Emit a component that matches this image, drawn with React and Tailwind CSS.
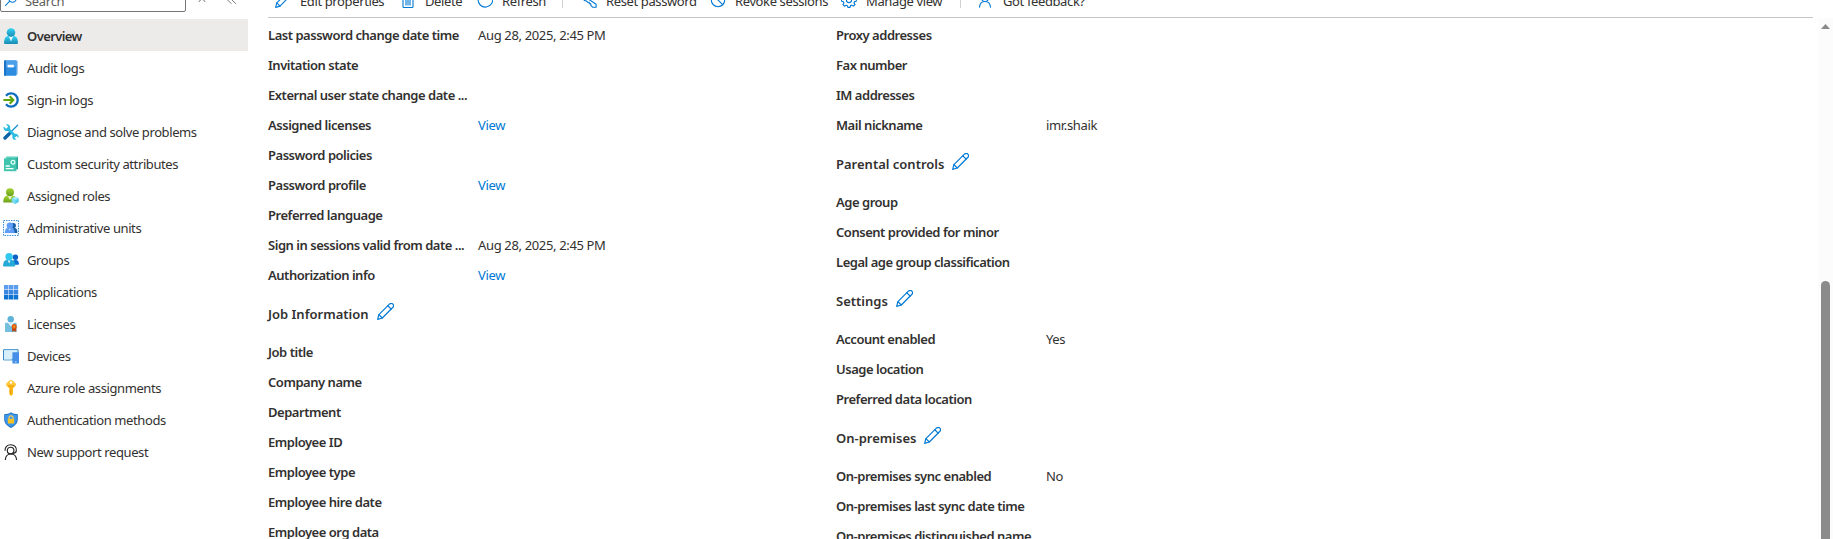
import React from "react";

const line = { fill: "none", stroke: "#0078d4", strokeWidth: 1.1, strokeLinejoin: "round", strokeLinecap: "round" };

function Svg({ children, className = "size-4", box = "0 0 16 16" }) {
  return (
    <svg viewBox={box} className={`${className} shrink-0`}>
      {children}
    </svg>
  );
}

function Pencil({ className }) {
  return (
    <Svg className={className}>
      <g {...line}>
        <path d="M.6 15.4 1.8 10.9 11.9.9a2.2 2.2 0 0 1 3.1 3.1L5 14.1Z" />
        <path d="m10.2 2.6 3.1 3.1M1.8 10.9 5 14.1" />
      </g>
    </Svg>
  );
}

const icons = {
  overview: (
    <Svg>
      <defs>
        <linearGradient id="ov" x2="0" y2="1">
          <stop stopColor="#32d4f5" />
          <stop offset="1" stopColor="#198ab3" />
        </linearGradient>
      </defs>
      <path d="M1 14.7C1.3 11 2.300 8.300 4.800 8h6.400c2.500.3 3.500 3 3.800 6.700q0 1.200-1.200 1.200H2.200Q1 15.900 1 14.700Z" fill="url(#ov)" />
      <path d="M5.600 7.900h4.800L8 13.500Z" fill="#e3f7fc" />
      <circle cx="8" cy="4.500" r="4.300" fill="url(#ov)" />
    </Svg>
  ),
  audit: (
    <Svg>
      <rect x="2" y=".4" width="13" height="14.200" rx="1" fill="#a7cdf0" />
      <rect x="1" y=".4" width="12.600" height="15.400" rx="1" fill="#2c8de0" />
      <path d="M1 1.400q0-1 1-1h10.600q1 0 1 1V7H1Z" fill="#4ba0ea" />
      <path d="M1 1.400q0-1 1-1h1v15.400H2q-1 0-1-1Z" fill="#1b74c8" />
      <rect x="4.600" y="4.800" width="6.200" height="2.600" fill="#fff" />
    </Svg>
  ),
  signin: (
    <Svg>
      <path d="M3 3.800A6.600 6.600 0 1 1 3 12.200" fill="none" stroke="#0f6cbd" strokeWidth="2.300" />
      <path d="M.4 8h9M6.700 4.200 10.300 8l-3.600 3.800" fill="none" stroke="#5ea508" strokeWidth="2.100" />
    </Svg>
  ),
  diagnose: (
    <Svg>
      <path d="m14.600 1.200-8 8" stroke="#1a8fd0" strokeWidth="1.300" strokeLinecap="round" />
      <path d="m6.300 9.700-4.300 4.300" stroke="#0a64a8" strokeWidth="3.400" strokeLinecap="round" />
      <path d="m4 4 8.800 8.800" stroke="#2cbbe0" strokeWidth="2.700" />
      <path d="M.8 2.600 3 4.800l1.800-.4.4-1.800L3 .5c2-.7 4.600.8 4.200 3.700C6.800 6.800 4 7.700 2.200 6.700.8 6 .2 4.300.8 2.600ZM15.300 13.700l-2-2-1.600.3-.4 1.600 2 2c-2 .6-4.200-.6-4-3 .2-2.400 2.500-3.400 4.300-2.600 1.600.7 2.300 2.200 1.700 3.700Z" fill="#2cbbe0" />
    </Svg>
  ),
  custom: (
    <Svg>
      <path d="M3.600.8H15v12.400h-2V3.500H3.600Z" fill="#27a294" />
      <rect x="1" y="2.600" width="12.400" height="12.600" fill="#3fc5ad" />
      <path d="M1 2.600 3.600.8H15l-1.600 1.800Z" fill="#5bd4bf" />
      <circle cx="10" cy="6.300" r="1.900" fill="none" stroke="#e7fffa" strokeWidth="1.200" />
      <path d="M2.700 10h4M2.700 12.600h7.800" stroke="#fff" strokeWidth="1.300" />
    </Svg>
  ),
  roles: (
    <Svg>
      <defs>
        <linearGradient id="gr" x2="0" y2="1">
          <stop stopColor="#a3d52b" />
          <stop offset="1" stopColor="#6a9f1f" />
        </linearGradient>
      </defs>
      <path d="M.2 13.400C.5 10.200 1.600 8 3.800 7.800h6.400c2.200.2 3.300 2.400 3.600 5.600q0 1.200-1.200 1.200H1.300Q.2 14.600.2 13.400Z" fill="url(#gr)" />
      <path d="M4.700 7.700h4.600L7 12Z" fill="#e9f7cf" />
      <circle cx="7" cy="4.200" r="4" fill="url(#gr)" />
      <path d="m12.300 8.700 3.500 1.600v3.800l-3.500 1.800-3.500-1.800v-3.800Z" fill="#55cdee" />
      <path d="m12.300 8.700 3.500 1.600-3.500 1.600-3.500-1.600Z" fill="#a6ebfa" />
      <path d="M12.300 11.900v4l-3.500-1.800v-3.800Z" fill="#7bdcf4" />
    </Svg>
  ),
  admin: (
    <Svg>
      <rect x=".5" y=".5" width="15" height="15" fill="#f4faff" stroke="#3b91d8" strokeDasharray="1.500 1" />
      <circle cx="10.200" cy="5.600" r="2.700" fill="#155ea8" />
      <path d="M8 13c0-3 .8-4.900 3.400-4.900 2.200 0 3 2 3 4.900Z" fill="#155ea8" />
      <circle cx="6.900" cy="5.600" r="3.200" fill="#5e9df5" />
      <path d="M1.700 13c.2-3 1.200-5 3-5h4c1.900 0 2.900 2 3 5Z" fill="#5e9df5" />
      <path d="M6 8.800h1.600L6.800 11Z" fill="#e6f1ff" />
    </Svg>
  ),
  groups: (
    <Svg>
      <circle cx="12.400" cy="5.300" r="2.700" fill="#0b62c4" />
      <path d="M9 12.800C9 9.700 10 8 12 8h1c2 0 2.900 1.900 3 4q0 .8-.8.8Z" fill="#0b72d4" />
      <path d="M0 13.500C.3 10.400 1.400 8.300 3.400 8.100h5.400c2 .2 3.100 2.300 3.400 5.400q0 1-1 1H1Q0 14.500 0 13.500Z" fill="#25a9d6" />
      <path d="M4.700 8.300h2.800L6.100 11.500Z" fill="#e3f7fc" />
      <circle cx="6.100" cy="4.800" r="3.700" fill="#32c8ee" />
    </Svg>
  ),
  apps: (
    <Svg>
      {[
        [1, "#5c9df0"],
        [6, "#3b87e0"],
        [11, "#0f74d1"],
      ].map(([y, fill]) => (
        <path key={y} fill={fill} d={`M1 ${y}h4.400v4.400H1ZM5.900 ${y}h4.400v4.400H5.900ZM10.800 ${y}h4.400v4.400h-4.400Z`} />
      ))}
    </Svg>
  ),
  licenses: (
    <Svg>
      <path d="M2 7.400q0-.6.6-.6H5l3 3.600 3-3.600h1.800q.8 0 .8.600v8q0 .5-.5.500H2.500q-.5 0-.5-.5Z" fill="#74bfdf" />
      <path d="M5.600 6.800h4.800L8 9.900Z" fill="#d8f0fa" />
      <circle cx="7.700" cy="3.300" r="3.200" fill="#5fb3d9" />
      <path d="M9.200 11h4v5l-2-1.200-2 1.200Z" fill="#c2410c" />
      <circle cx="11.200" cy="10.600" r="2.500" fill="#dd5a0b" />
      <circle cx="11.200" cy="10.600" r="1.100" fill="#f6a030" />
    </Svg>
  ),
  devices: (
    <Svg>
      <path d="M.5 1.700h14.600v10.200H.5Z" fill="#bfe4f7" stroke="#3789ca" />
      <path d="M1 2.200h13.600L8 11.400H1Z" fill="#d6effb" />
      <rect x="9.400" y="4.200" width="6.600" height="11.300" rx=".6" fill="#448fe8" />
      <path d="M12 13.900h1.500" stroke="#cfe4ff" />
    </Svg>
  ),
  key: (
    <Svg>
      <path d="M8 0c.8 0 4.700 3.300 4.900 4.300.2 1.300-2.200 3.300-2.900 3.800v6L8.200 16 6.300 14.300V8.100C5.500 7.600 3 5.600 3.200 4.300 3.400 3.300 7.200 0 8 0Z" fill="#fbb714" />
      <path d="M8 0c.8 0 4.700 3.300 4.900 4.300.1.500-.2 1-.6 1.600H3.700c-.4-.6-.6-1.100-.5-1.600C3.400 3.300 7.200 0 8 0Z" fill="#ffc83a" />
      <circle cx="8" cy="2.500" r="1.200" fill="#fff" />
      <path d="M5.200 5.900h5.600" stroke="#e88d00" strokeWidth=".8" />
      <path d="M7.600 9v5" stroke="#e59a00" strokeWidth=".9" />
    </Svg>
  ),
  auth: (
    <Svg>
      <path d="M8 .2c2.300 1.600 4.200 1.900 6.800 2v5c0 4.300-3.400 7-6.800 8.700-3.400-1.700-6.800-4.400-6.800-8.700v-5C3.800 2.100 5.700 1.800 8 .2Z" fill="#1b73c4" />
      <path d="M8 1.300c2 1.300 3.700 1.700 5.900 1.800v4.100c0 3.800-2.900 6-5.900 7.600-3-1.600-5.900-3.800-5.900-7.600V3.100C4.300 3 6 2.600 8 1.300Z" fill="#4096e8" />
      <path d="M6 7.200V5.800c0-2.600 4-2.600 4 0v1.400" fill="none" stroke="#ffd24d" strokeWidth="1.100" />
      <rect x="4.900" y="6.800" width="6.200" height="4.600" rx=".5" fill="#f7c223" />
    </Svg>
  ),
  support: (
    <Svg>
      <g fill="none" stroke="#222" strokeWidth="1.150">
        <circle cx="7.600" cy="6.500" r="3.300" />
        <path d="M2 6.800C1.900 3 4.200.7 7.700.7s6.300 2.600 5.600 6.400c-.3 1.500-1.600 2.200-4 2.200" />
        <path d="M2.300 16c.2-3.600 2.300-6 5.600-6s5.500 2.400 5.700 6" />
      </g>
    </Svg>
  ),
};

const nav = [
  ["overview", "Overview"],
  ["audit", "Audit logs"],
  ["signin", "Sign-in logs"],
  ["diagnose", "Diagnose and solve problems"],
  ["custom", "Custom security attributes"],
  ["roles", "Assigned roles"],
  ["admin", "Administrative units"],
  ["groups", "Groups"],
  ["apps", "Applications"],
  ["licenses", "Licenses"],
  ["devices", "Devices"],
  ["key", "Azure role assignments"],
  ["auth", "Authentication methods"],
  ["support", "New support request"],
];

function Sidebar() {
  return (
    <aside className="w-[248px] shrink-0">
      <div className="-mt-[12px] mb-[7px] flex h-6 items-center">
        <div className="flex h-6 w-[186px] items-center rounded-[2px] border border-[#767676] pl-1">
          <Svg className="size-3">
            <g {...line} strokeWidth="1.400">
              <circle cx="10" cy="6" r="5" />
              <path d="M6.400 9.600.8 15.200" />
            </g>
          </Svg>
          <span className="ml-2 pt-[2px] tracking-[-0.3px] text-[#605e5c]">Search</span>
        </div>
        <Svg className="ml-[11px] size-[10px]">
          <path d="m3 11 5-6 5 6" fill="none" stroke="#605e5c" strokeWidth="1.500" />
        </Svg>
        <Svg className="ml-[20px] size-[10px]">
          <path d="M7 2 1 8l6 6M14 2 8 8l6 6" fill="none" stroke="#605e5c" strokeWidth="1.300" />
        </Svg>
      </div>
      <nav>
        {nav.map(([icon, label], i) => (
          <a
            key={icon}
            className={`flex h-8 items-center gap-2 pt-[2px] pl-[3px] ${i === 0 ? "bg-[#edebe9] font-semibold tracking-[-0.6px]" : ""}`}
          >
            {icons[icon]}
            <span>{label}</span>
          </a>
        ))}
      </nav>
    </aside>
  );
}

function Tool({ icon, label, className }) {
  return (
    <div className={`flex shrink-0 items-center ${className}`}>
      {icon}
      <span className="ml-[9px] pt-[2px] whitespace-nowrap">{label}</span>
    </div>
  );
}

function Toolbar() {
  return (
    <div className="-mt-[18px] flex h-9 w-[1545px] items-center border-b border-[#c8c6c4] pl-[7px] tracking-[-0.38px]">
      <Tool className="w-[125px]" icon={<Pencil className="size-4" />} label="Edit properties" />
      <Tool
        className="w-[77px]"
        label="Delete"
        icon={
          <Svg>
            <path {...line} d="M1.500 3h13M5.500 3V1h5v2M3 3v11.500q0 1 1 1h8q1 0 1-1V3M6 5.500v7.500M8 5.500v7.500M10 5.500v7.500" />
          </Svg>
        }
      />
      <Tool
        className="w-[85px]"
        label="Refresh"
        icon={
          <Svg>
            <path {...line} d="M10.500.8A7.300 7.300 0 1 1 4.500 1.600M4.800 5V1.200H1" />
          </Svg>
        }
      />
      <div className="h-[17px] w-px bg-[#d2d0ce]" />
      <Tool
        className="ml-[18px] w-[129px]"
        label="Reset password"
        icon={
          <Svg>
            <path {...line} d="M8.500 7.800A4 4 0 1 0 5.500 9l1.300 1.300h1.500v1.500h1.500v1.500l2 2h3.300v-3Z" />
          </Svg>
        }
      />
      <Tool
        className="w-[131px]"
        label="Revoke sessions"
        icon={
          <Svg>
            <circle {...line} cx="8" cy="8" r="6.700" />
            <path {...line} d="m3.300 3.300 9.400 9.400" />
          </Svg>
        }
      />
      <Tool
        className="w-[119px]"
        label="Manage view"
        icon={
          <Svg>
            <circle {...line} cx="8" cy="8" r="2.600" />
            <path {...line} d="m6.800.8-.4 1.900-1.300.6-1.700-1.100-1.600 1.600 1 1.800-.5 1.200-1.700.4v2l1.800.5.5 1.300-1 1.600 1.500 1.600 1.800-1 1.200.5.500 1.700h2.200l.4-1.800 1.300-.5 1.700 1 1.500-1.500-1-1.700.5-1.300 1.800-.4v-2l-1.800-.5-.5-1.300 1-1.700-1.500-1.500-1.700 1-1.300-.5L9.100.8Z" />
          </Svg>
        }
      />
      <div className="h-[17px] w-px bg-[#d2d0ce]" />
      <Tool
        className="ml-[17px]"
        label="Got feedback?"
        icon={
          <Svg>
            <circle {...line} cx="7" cy="6" r="3.500" />
            <path {...line} d="M1.500 15.300c.3-3.700 2.200-5.800 5.500-5.800s5.200 2.100 5.500 5.800M10 1h5v5h-2l-1.500 1.500" />
          </Svg>
        }
      />
    </div>
  );
}

function Row({ label, value, link }) {
  return (
    <div className="flex h-[30px] items-center">
      <dt className="w-[210px] shrink-0 whitespace-nowrap font-semibold tracking-[-0.47px]">{label}</dt>
      <dd className={`whitespace-nowrap tracking-[-0.35px] ${link ? "text-[#0078d4]" : ""}`}>{value}</dd>
    </div>
  );
}

function Heading({ children }) {
  return (
    <h3 className="flex h-[47px] items-center gap-2 text-[13px] font-semibold tracking-[0px]">
      {children}
      <Pencil className="-mt-[5px] size-[17px]" />
    </h3>
  );
}

function Section({ title, rows }) {
  return (
    <section>
      {title && <Heading>{title}</Heading>}
      <dl>
        {rows.map(([label, value]) => (
          <Row key={label} label={label} value={value} link={value === "View"} />
        ))}
      </dl>
    </section>
  );
}

const left = [
  {
    rows: [
      ["Last password change date time", "Aug 28, 2025, 2:45 PM"],
      ["Invitation state"],
      ["External user state change date ..."],
      ["Assigned licenses", "View"],
      ["Password policies"],
      ["Password profile", "View"],
      ["Preferred language"],
      ["Sign in sessions valid from date ...", "Aug 28, 2025, 2:45 PM"],
      ["Authorization info", "View"],
    ],
  },
  {
    title: "Job Information",
    rows: [
      ["Job title"],
      ["Company name"],
      ["Department"],
      ["Employee ID"],
      ["Employee type"],
      ["Employee hire date"],
      ["Employee org data"],
    ],
  },
];

const right = [
  { rows: [["Proxy addresses"], ["Fax number"], ["IM addresses"], ["Mail nickname", "imr.shaik"]] },
  { title: "Parental controls", rows: [["Age group"], ["Consent provided for minor"], ["Legal age group classification"]] },
  { title: "Settings", rows: [["Account enabled", "Yes"], ["Usage location"], ["Preferred data location"]] },
  {
    title: "On-premises",
    rows: [["On-premises sync enabled", "No"], ["On-premises last sync date time"], ["On-premises distinguished name"]],
  },
];

function Scrollbar() {
  return (
    <div className="mt-[18px] flex w-[15px] shrink-0 flex-col items-center bg-[#fcfcfc]">
      <Svg className="mt-[6px] h-[5px] w-[9px]" box="0 0 9 5">
        <path d="M4.500 0 9 5H0Z" fill="#8b8b8b" />
      </Svg>
      <div className="mt-[252px] w-[9px] flex-1 rounded-t-full bg-[#8b8b8b]" />
    </div>
  );
}

export default function App() {
  return (
    <div className="flex h-[539px] w-[1833px] overflow-hidden bg-white font-['Noto_Sans','Open_Sans',sans-serif] text-[13px] leading-[18px] tracking-[-0.4px] text-[#323130]">
      <Sidebar />
      <main className="ml-5 w-[1550px] shrink-0">
        <Toolbar />
        <div className="flex pt-[2px]">
          <div className="w-[568px] shrink-0">
            {left.map((s, i) => (
              <Section key={i} {...s} />
            ))}
          </div>
          <div>
            {right.map((s, i) => (
              <Section key={i} {...s} />
            ))}
          </div>
        </div>
      </main>
      <Scrollbar />
    </div>
  );
}
